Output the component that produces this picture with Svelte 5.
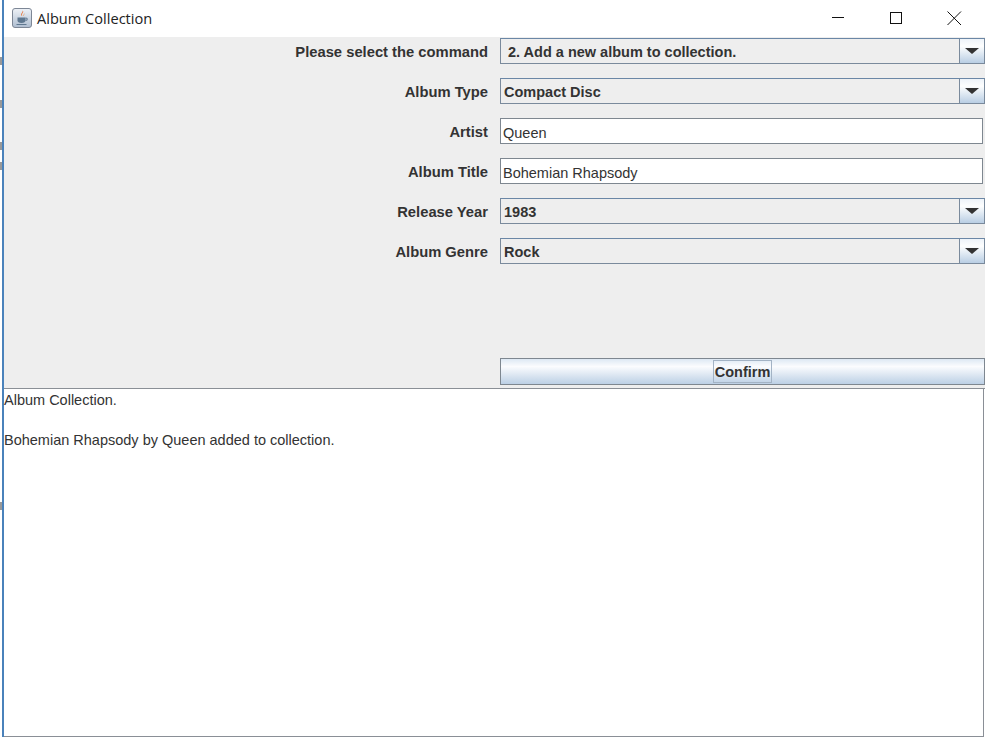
<script>
  const rows = [
    { label: 'Please select the command', type: 'combo', value: '2. Add a new album to collection.', first: true },
    { label: 'Album Type', type: 'combo', value: 'Compact Disc' },
    { label: 'Artist', type: 'text', value: 'Queen' },
    { label: 'Album Title', type: 'text', value: 'Bohemian Rhapsody' },
    { label: 'Release Year', type: 'combo', value: '1983' },
    { label: 'Album Genre', type: 'combo', value: 'Rock' }
  ];

  // bits of the window behind that stick out on the left edge
  const specks = [57, 100, 142, 162, 502];
</script>

<div class="screen">
  <div class="behind">
    {#each specks as y}
      <span class="speck" style="top: {y}px"></span>
    {/each}
  </div>

  <div class="window">
    <div class="titlebar">
      <svg class="app-icon" width="20" height="20" viewBox="0 0 20 20">
        <defs>
          <linearGradient id="tile" x1="0" y1="0" x2="0" y2="1">
            <stop offset="0" stop-color="#eef2f7" />
            <stop offset="1" stop-color="#aebdd0" />
          </linearGradient>
        </defs>
        <rect x="0.5" y="0.5" width="19" height="19" rx="2.5" fill="url(#tile)" stroke="#7d8796" />
        <path d="M10.8 2.5c1.6 1.8-2 3-.6 5.5-2.8-1.6.8-3.4.6-5.5z" fill="#e8641f" />
        <path d="M12.6 5c.5 1.2-1.4 1.8-.5 3.2-1.7-1 .4-2 .5-3.2z" fill="#f0812f" />
        <path d="M5.5 9.5h8v3c0 1.6-1.4 2.5-4 2.5s-4-.9-4-2.5z" fill="#5f7890" />
        <path d="M13.5 10.2h1.6v2h-1.6" fill="none" stroke="#5f7890" />
        <path d="M4.5 16.5h10" stroke="#5f7890" stroke-width="1" />
      </svg>
      <span class="title">Album Collection</span>
      <div class="controls">
        <svg width="58" height="36" viewBox="0 0 58 36"><path d="M32 17.5h12" stroke="#111" stroke-width="1" /></svg>
        <svg width="58" height="36" viewBox="0 0 58 36"><rect x="32.5" y="12.5" width="11" height="11" fill="none" stroke="#111" /></svg>
        <svg width="58" height="36" viewBox="0 0 58 36"><path d="M31.5 11.5l13.5 13.5M45 11.5l-13.5 13.5" stroke="#111" stroke-width="1" /></svg>
      </div>
    </div>

    <div class="panel">
      <div class="form">
        {#each rows as row}
          <div class="row">
            <span class="label">{row.label}</span>
            {#if row.type === 'combo'}
              <div class="combo">
                <span class="combo-value" class:first={row.first}>{row.value}</span>
                <span class="arrow-btn"><span class="arrow"></span></span>
              </div>
            {:else}
              <div class="text-field">{row.value}</div>
            {/if}
          </div>
        {/each}
      </div>
      <div class="actions">
        <button class="confirm"><span class="focus">Confirm</span></button>
      </div>
    </div>

    <div class="output">
      <p>Album Collection.</p>
      <p>Bohemian Rhapsody by Queen added to collection.</p>
    </div>
  </div>
</div>

<style>
  :global(body) {
    margin: 0;
    background: #fff;
  }

  .screen {
    display: flex;
    width: 985px;
    height: 737px;
    overflow: hidden;
  }

  .behind {
    position: relative;
    width: 2px;
    flex: none;
  }

  .speck {
    position: absolute;
    left: 0;
    width: 2px;
    height: 8px;
    background: #555;
    opacity: 0.6;
  }

  .window {
    box-sizing: border-box;
    width: 983px;
    border-left: 2px solid #4a82bb;
    display: flex;
    flex-direction: column;
    font-family: "Liberation Sans", Arial, sans-serif;
    color: #333;
  }

  .titlebar {
    height: 37px;
    flex: none;
    display: flex;
    align-items: center;
    background: #fff;
    padding-left: 8px;
    padding-bottom: 1px;
    box-sizing: border-box;
  }

  .app-icon {
    margin-right: 5px;
  }

  .title {
    font-family: "Open Sans", sans-serif;
    font-size: 14.6px;
    color: #222;
  }

  .controls {
    margin-left: auto;
    display: flex;
    padding-right: 11px;
  }

  .panel {
    height: 352px;
    flex: none;
    background: #eeeeee;
    display: flex;
    flex-direction: column;
    border-bottom: 1px solid #8a8f96;
    box-sizing: border-box;
  }

  .form {
    padding-top: 1px;
    display: flex;
    flex-direction: column;
    gap: 14px;
  }

  .row {
    display: grid;
    grid-template-columns: 484px 485px;
    column-gap: 12px;
    height: 26px;
    align-items: center;
  }

  .label {
    text-align: right;
    font-size: 14.75px;
    font-weight: bold;
    padding-top: 2px;
  }

  .combo {
    display: flex;
    height: 26px;
    box-sizing: border-box;
    border: 1px solid #7a8a9c;
    border-top-color: #6b87a6;
    background: #eeeeee;
  }

  .combo-value {
    flex: 1;
    font-size: 14.5px;
    font-weight: bold;
    line-height: 26px;
    padding-left: 3px;
  }

  .combo-value.first {
    padding-left: 7px;
  }

  .arrow-btn {
    width: 24px;
    border-left: 1px solid #7a8a9c;
    background: linear-gradient(#eef3f9, #fdfefe 30%, #b9cee4);
    display: flex;
    align-items: center;
    justify-content: center;
  }

  .arrow {
    width: 0;
    height: 0;
    border-left: 7px solid transparent;
    border-right: 7px solid transparent;
    border-top: 6px solid #333;
  }

  .text-field {
    width: 483px;
    height: 26px;
    box-sizing: border-box;
    border: 1px solid #7e8790;
    background: #fff;
    font-size: 14.5px;
    line-height: 28px;
    padding-left: 2px;
  }

  .actions {
    margin-top: auto;
    padding-left: 496px;
    padding-bottom: 3px;
  }

  .confirm {
    display: flex;
    justify-content: center;
    align-items: center;
    width: 485px;
    height: 27px;
    padding: 0;
    border: 1px solid #7e8790;
    background: linear-gradient(#dde8f3, #fbfcfe 30%, #bcd0e5);
    font: bold 14.5px "Liberation Sans", Arial, sans-serif;
    color: #333;
  }

  .focus {
    border: 1px solid #a3b3c5;
    padding: 0 1px;
    height: 23px;
    line-height: 23px;
    box-sizing: border-box;
  }

  .output {
    flex: 1;
    background: #fff;
    border: 1px solid #8a8f96;
    border-width: 0 1px 1px 0;
    margin-right: 1px;
    font-size: 14.5px;
    padding-top: 3px;
  }

  .output p {
    margin: 0 0 24px;
    line-height: 16px;
  }
</style>
